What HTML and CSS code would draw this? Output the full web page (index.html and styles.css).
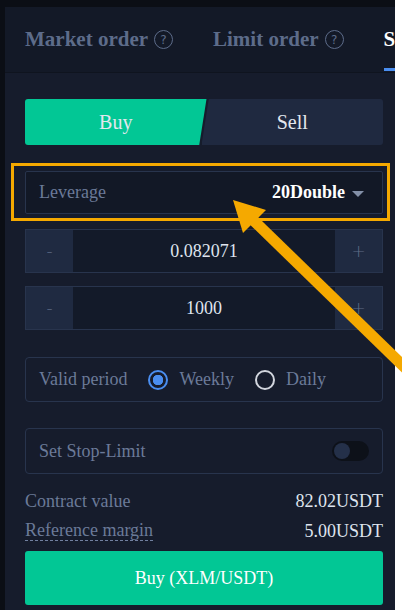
FILE: index.html
```html
<!DOCTYPE html>
<html lang="en">
  <head>
    <title>Order panel</title>
    <meta charset="UTF-8">
    <meta name="viewport" content="width=device-width, initial-scale=1">
    <link rel="stylesheet" href="styles.css">
  </head>
  <body>
    <div class="frame">
      <div class="panel">
        <nav class="tabs">
          <span class="tab">Market order <span class="qmark">?</span></span>
          <span class="tab">Limit order <span class="qmark">?</span></span>
          <span class="tab active">S</span>
        </nav>

        <main class="form">
          <div class="side">
            <button class="side-btn buy">Buy</button>
            <button class="side-btn sell">Sell</button>
          </div>

          <div class="field leverage">
            <span class="label">Leverage</span>
            <span class="lev-value">20Double <i class="caret"></i></span>
            <span class="highlight"></span>
          </div>

          <div class="stepper">
            <span class="step">-</span>
            <span class="step-value">0.082071</span>
            <span class="step">+</span>
          </div>
          <div class="stepper">
            <span class="step">-</span>
            <span class="step-value">1000</span>
            <span class="step">+</span>
          </div>

          <div class="field period">
            <span class="label">Valid period</span>
            <label class="radio checked"><i></i>Weekly</label>
            <label class="radio"><i></i>Daily</label>
          </div>

          <div class="field stop">
            <span class="label">Set Stop-Limit</span>
            <span class="toggle"><i></i></span>
          </div>

          <div class="info first">
            <span class="label">Contract value</span>
            <span class="value">82.02USDT</span>
          </div>
          <div class="info">
            <span class="label dashed">Reference margin</span>
            <span class="value">5.00USDT</span>
          </div>

          <button class="submit">Buy (XLM/USDT)</button>
        </main>
      </div>
    </div>

    <!-- annotation arrow -->
    <svg class="arrow" width="402" height="610" viewBox="0 0 402 610">
      <line x1="250" y1="217" x2="430" y2="392" stroke="#f5a900" stroke-width="11"/>
      <polygon points="233,200 266,210 243,233" fill="#f5a900"/>
    </svg>
  </body>
</html>
```

FILE: styles.css
```css
:root {
  --bg-outer: #0b0e15;
  --bg-head: #131927;
  --bg-panel: #161c2c;
  --bg-field: #131a29;
  --bg-step: #1f2a41;
  --border: #28344d;
  --txt-dim: #6b7a98;
  --txt: #dfe4ee;
  --green: #02c795;
  --orange: #f5a900;
  --blue: #4a8ef0;
}

body {
  margin: 0;
  background: #fff;
  overflow: hidden;
}

.frame {
  width: 395px;
  height: 610px;
  box-sizing: border-box;
  padding: 7px 0 0 5px;
  background: var(--bg-outer);
  font-family: "Liberation Serif", serif;
}

.side-btn, .submit {
  font-family: "Liberation Serif", serif;
}

.panel {
  height: 100%;
  background: var(--bg-panel);
  overflow: hidden;
}

.tabs {
  display: flex;
  gap: 40px;
  height: 65px;
  padding-left: 20px;
  background: var(--bg-head);
  border-bottom: 1px solid #0f141f;
  white-space: nowrap;
}

.tab {
  display: flex;
  align-items: center;
  gap: 6px;
  font-size: 21px;
  font-weight: bold;
  color: #5d6c8a;
  position: relative;
}

.tab.active {
  color: #fff;
}

.tab.active::after {
  content: "";
  position: absolute;
  left: 0;
  width: 30px;
  bottom: 1px;
  height: 3px;
  background: var(--blue);
}

.qmark {
  width: 19px;
  height: 19px;
  box-sizing: border-box;
  border: 1.5px solid #5d6c8a;
  border-radius: 50%;
  display: inline-flex;
  align-items: center;
  justify-content: center;
  font-family: "DejaVu Sans", sans-serif;
  font-size: 12px;
  font-weight: normal;
}

.form {
  width: 358px;
  margin-left: 20px;
  padding-top: 26px;
  display: flex;
  flex-direction: column;
}

.side {
  display: flex;
  height: 46px;
  gap: 3px;
}

.side-btn {
  flex: 1;
  border: 0;
  font-size: 20px;
  color: #e3e7ef;
  padding: 0;
}

.buy {
  background: var(--green);
  border-radius: 3px 0 0 3px;
  clip-path: polygon(0 0, 100% 0, 96% 100%, 0 100%);
  margin-right: -4px;
}

.sell {
  background: #1f2940;
  border-radius: 0 3px 3px 0;
  clip-path: polygon(4% 0, 100% 0, 100% 100%, 0 100%);
  margin-left: -4px;
}

.field {
  display: flex;
  align-items: center;
  border: 1px solid var(--border);
  border-radius: 4px;
  padding: 0 13px;
  box-sizing: border-box;
}

.label {
  color: var(--txt-dim);
  font-size: 18px;
}

.leverage {
  position: relative;
  height: 43px;
  margin-top: 26px;
  background: #121826;
  justify-content: space-between;
  padding-right: 18px;
  border-radius: 2px;
}

.lev-value {
  color: #fff;
  font-weight: bold;
  font-size: 18px;
  display: flex;
  align-items: center;
  gap: 7px;
}

.caret {
  width: 0;
  height: 0;
  border-left: 6px solid transparent;
  border-right: 6px solid transparent;
  border-top: 6px solid #8390a8;
  margin-top: 2px;
}

.highlight {
  position: absolute;
  left: -15px;
  top: -9px;
  right: -8px;
  bottom: -8px;
  border: 3px solid var(--orange);
}

.stepper {
  display: flex;
  height: 44px;
  margin-top: 15px;
  border: 1px solid var(--border);
  background: var(--bg-field);
  box-sizing: border-box;
}

.stepper + .stepper {
  margin-top: 13px;
}

.step {
  width: 47px;
  background: var(--bg-step);
  color: #5f6d88;
  display: flex;
  align-items: center;
  justify-content: center;
  font-family: "DejaVu Sans", sans-serif;
  font-size: 17px;
  font-weight: 300;
}

.step-value {
  flex: 1;
  display: flex;
  align-items: center;
  justify-content: center;
  color: var(--txt);
  font-size: 18px;
}

.period {
  height: 45px;
  margin-top: 27px;
  gap: 21px;
}

.radio {
  display: flex;
  align-items: center;
  gap: 11px;
  color: var(--txt-dim);
  font-size: 18px;
}

.radio i {
  width: 20px;
  height: 20px;
  box-sizing: border-box;
  border: 2px solid #d2d6de;
  border-radius: 50%;
}

.radio.checked i {
  border-color: var(--blue);
  background: radial-gradient(circle, var(--blue) 0 5px, transparent 5.5px);
}

.stop {
  height: 46px;
  margin-top: 26px;
  justify-content: space-between;
}

.toggle {
  width: 37px;
  height: 20px;
  border-radius: 10px;
  background: #0d1119;
  display: flex;
  align-items: center;
  padding: 0 2px;
  box-sizing: border-box;
}

.toggle i {
  width: 16px;
  height: 16px;
  border-radius: 50%;
  background: #243049;
}

.info {
  display: flex;
  justify-content: space-between;
  align-items: center;
  height: 30px;
}

.value {
  color: var(--txt);
  font-size: 18px;
}

.info.first {
  margin-top: 12px;
}

.dashed {
  border-bottom: 1px dashed #7180a0;
  line-height: 19px;
}

.submit {
  height: 54px;
  margin-top: 5px;
  border: 0;
  border-radius: 3px;
  background: var(--green);
  color: #fff;
  font-size: 18px;
}

.arrow {
  position: absolute;
  left: 0;
  top: 0;
  pointer-events: none;
}
```
